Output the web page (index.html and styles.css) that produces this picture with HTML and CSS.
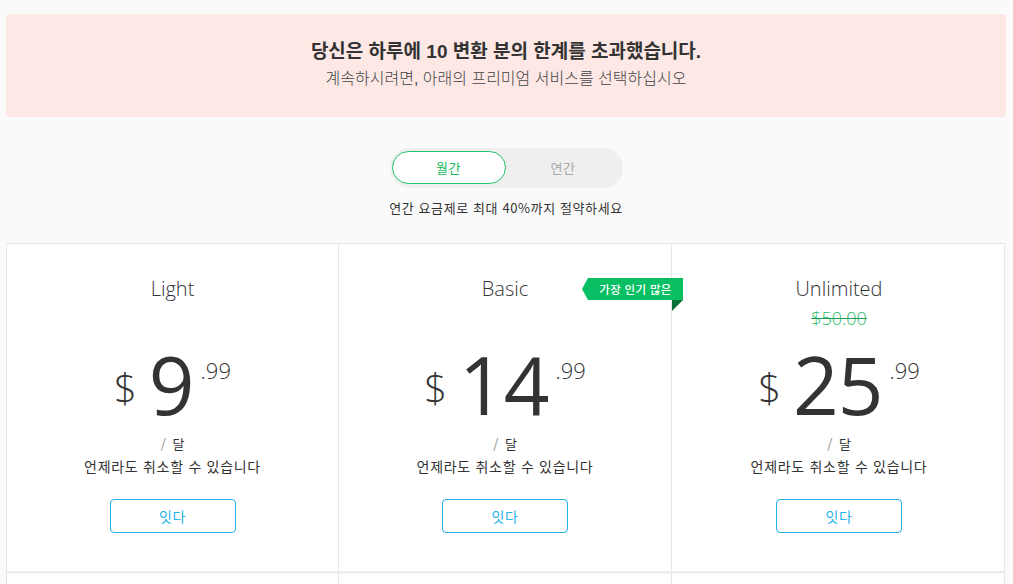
FILE: index.html
```html
<!DOCTYPE html>
<html lang="ko">
<head>
<meta charset="utf-8">
<link rel="stylesheet" href="styles.css">
</head>
<body>
<div class="page">
  <div class="banner">
    <h1 class="banner-title">당신은 하루에 10 변환 분의 한계를 초과했습니다.</h1>
    <p class="banner-sub">계속하시려면, 아래의 프리미엄 서비스를 선택하십시오</p>
  </div>

  <div class="billing">
    <div class="toggle">
      <span class="toggle-opt active">월간</span>
      <span class="toggle-opt">연간</span>
    </div>
    <p class="save-note">연간 요금제로 최대 40%까지 절약하세요</p>
  </div>

  <div class="plans">
    <div class="plan">
      <div class="plan-name">Light</div>
      <div class="old-price"></div>
      <div class="price"><span class="cur">$</span><span class="amount">9</span><span class="cents">.99</span></div>
      <div class="period"><span class="slash">/</span> 달</div>
      <div class="cancel">언제라도 취소할 수 있습니다</div>
      <button class="go">잇다</button>
    </div>
    <div class="plan">
      <div class="badge">가장 인기 많은</div>
      <div class="plan-name">Basic</div>
      <div class="old-price"></div>
      <div class="price"><span class="cur">$</span><span class="amount">14</span><span class="cents">.99</span></div>
      <div class="period"><span class="slash">/</span> 달</div>
      <div class="cancel">언제라도 취소할 수 있습니다</div>
      <button class="go">잇다</button>
    </div>
    <div class="plan">
      <div class="plan-name">Unlimited</div>
      <div class="old-price"><s>$50.00</s></div>
      <div class="price"><span class="cur">$</span><span class="amount">25</span><span class="cents">.99</span></div>
      <div class="period"><span class="slash">/</span> 달</div>
      <div class="cancel">언제라도 취소할 수 있습니다</div>
      <button class="go">잇다</button>
    </div>
  </div>
  <div class="plans-next">
    <div class="next-cell"></div>
    <div class="next-cell"></div>
    <div class="next-cell"></div>
  </div>
</div>
</body>
</html>
```

FILE: styles.css
```css
* { box-sizing: border-box; }
html, body { margin: 0; padding: 0; }
body {
  background: #fafafa;
  color: #333;
  font-family: "Open Sans", "Noto Sans CJK KR", sans-serif;
  overflow: hidden;
}
.page {
  width: 1000px;
  margin-left: 6px;
  padding-top: 14px;
}
.banner {
  background: #fde8e5;
  border-radius: 3px;
  height: 103px;
  padding-top: 26px;
  text-align: center;
}
.banner-title {
  margin: 0;
  font-family: "Liberation Sans", "Noto Sans CJK KR", sans-serif;
  font-size: 19px;
  font-weight: 700;
  line-height: 24px;
  color: #333;
}
.banner-sub {
  margin: 4px 0 0;
  font-family: "Liberation Sans", "Noto Sans CJK KR", sans-serif;
  font-size: 16px;
  font-weight: 300;
  line-height: 22px;
  color: #444;
}
.billing {
  padding-top: 31px;
  display: flex;
  flex-direction: column;
  align-items: center;
}
.toggle {
  width: 233px;
  height: 40px;
  background: #efefef;
  border-radius: 20px;
  display: flex;
  padding: 3px 0 0 2px;
}
.toggle-opt {
  width: 115px;
  height: 33px;
  line-height: 31px;
  text-align: center;
  font-family: "Noto Sans CJK KR", sans-serif;
  font-size: 13px;
  letter-spacing: 0.5px;
  color: #aaa;
  border-radius: 17px;
  border: 1px solid transparent;
}
.toggle-opt.active {
  width: 114px;
  background: #fff;
  border-color: #1fc26b;
  color: #14b85e;
}
.save-note {
  margin: 10px 0 0;
  font-family: "Noto Sans CJK KR", sans-serif;
  font-size: 13px;
  letter-spacing: 0.6px;
  line-height: 20px;
  color: #333;
}
.plans {
  margin-top: 25px;
  display: grid;
  grid-template-columns: 332px 333px 334px;
  border: 1px solid #e6e6e6;
  border-bottom: none;
  background: #fff;
  width: 999px;
}
.plan {
  position: relative;
  height: 327px;
  padding-top: 33px;
  display: flex;
  flex-direction: column;
  align-items: center;
  border-right: 1px solid #e6e6e6;
}
.plan:last-child { border-right: none; }
.plan-name {
  font-size: 20px;
  font-weight: 300;
  line-height: 24px;
  color: #333;
}
.old-price {
  height: 26px;
  margin-top: 4px;
  font-size: 18px;
  line-height: 26px;
  font-weight: 300;
  color: #2dbd6e;
}
.old-price s {
  text-decoration-color: #1a9e4f;
  text-decoration-thickness: 1px;
}
.price {
  margin-top: 13px;
  height: 80px;
  display: flex;
  align-items: flex-start;
  color: #333;
}
.cur {
  font-size: 40px;
  line-height: 40px;
  font-weight: 300;
  margin-top: 24px;
  margin-right: 12px;
}
.amount {
  font-size: 80px;
  line-height: 80px;
  font-weight: 400;
  letter-spacing: -1px;
}
.cents {
  font-size: 22px;
  line-height: 22px;
  font-weight: 300;
  margin-top: 15px;
  margin-left: 7px;
}
.period {
  margin-top: 10px;
  font-family: "Noto Sans CJK KR", sans-serif;
  font-size: 13px;
  line-height: 20px;
  color: #333;
}
.slash { color: #888; margin-right: 3px; }
.cancel {
  margin-top: 2px;
  font-family: "Noto Sans CJK KR", sans-serif;
  font-size: 14px;
  letter-spacing: 0.7px;
  line-height: 20px;
  color: #333;
}
.go {
  margin-top: 23px;
  width: 126px;
  height: 34px;
  background: #fff;
  border: 1px solid #1fb3e6;
  border-radius: 4px;
  color: #1fb3e6;
  font-family: "Noto Sans CJK KR", sans-serif;
  font-size: 14px;
  letter-spacing: 0.5px;
  padding: 0;
}
.badge {
  position: absolute;
  top: 34px;
  right: -12px;
  width: 101px;
  height: 22px;
  background: #08bf64;
  color: #fff;
  font-family: "Noto Sans CJK KR", sans-serif;
  font-size: 11.5px;
  font-weight: 500;
  letter-spacing: 0.3px;
  line-height: 22px;
  padding-left: 6px;
  text-align: center;
  clip-path: polygon(6px 0, 100% 0, 100% 100%, 6px 100%, 0 50%);
}
.plan:nth-child(2)::after {
  content: "";
  position: absolute;
  top: 56px;
  right: -12px;
  width: 0;
  height: 0;
  border-top: 11px solid #0a6f38;
  border-right: 11px solid transparent;
  z-index: 2;
}
.plans-next {
  display: grid;
  grid-template-columns: 332px 333px 334px;
  width: 999px;
  background: #fff;
  border-left: 1px solid #e6e6e6;
  border-right: 1px solid #e6e6e6;
  border-top: 2px solid #ececec;
  box-shadow: inset 0 1px 2px rgba(0,0,0,0.04);
  height: 20px;
}
.next-cell { border-right: 1px solid #e6e6e6; }
.next-cell:last-child { border-right: none; }
```
